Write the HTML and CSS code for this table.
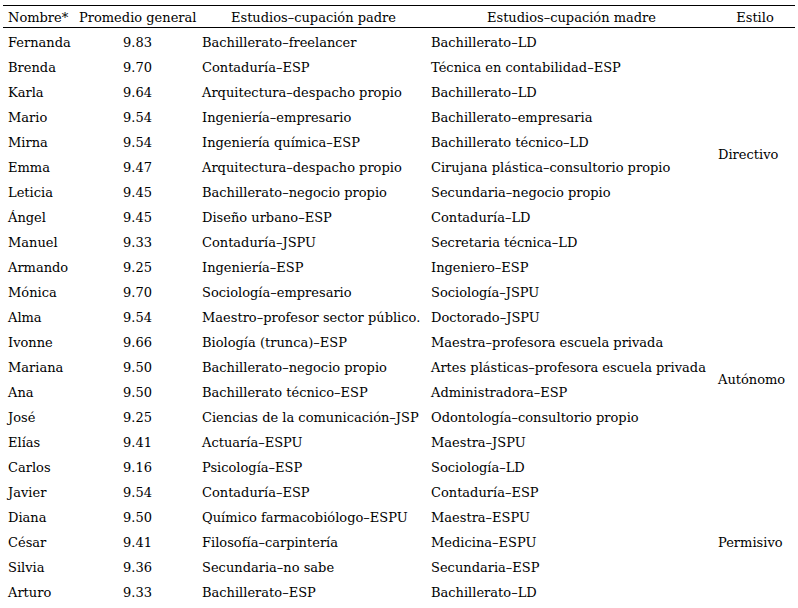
FILE: index.html
```html
<!DOCTYPE html>
<html lang="es">
<head>
<meta charset="utf-8">
<link rel="stylesheet" href="styles.css">
</head>
<body>
<table class="data">
  <colgroup>
    <col class="c-name"><col class="c-avg"><col class="c-dad"><col class="c-mom"><col class="c-style">
  </colgroup>
  <thead>
    <tr>
      <th class="left">Nombre*</th>
      <th>Promedio general</th>
      <th>Estudios–cupación padre</th>
      <th>Estudios–cupación madre</th>
      <th>Estilo</th>
    </tr>
  </thead>
  <tbody>
    <tr><td>Fernanda</td><td class="num">9.83</td><td>Bachillerato–freelancer</td><td>Bachillerato–LD</td><td class="style" rowspan="10">Directivo</td></tr>
    <tr><td>Brenda</td><td class="num">9.70</td><td>Contaduría–ESP</td><td>Técnica en contabilidad–ESP</td></tr>
    <tr><td>Karla</td><td class="num">9.64</td><td>Arquitectura–despacho propio</td><td>Bachillerato–LD</td></tr>
    <tr><td>Mario</td><td class="num">9.54</td><td>Ingeniería–empresario</td><td>Bachillerato–empresaria</td></tr>
    <tr><td>Mirna</td><td class="num">9.54</td><td>Ingeniería química–ESP</td><td>Bachillerato técnico–LD</td></tr>
    <tr><td>Emma</td><td class="num">9.47</td><td>Arquitectura–despacho propio</td><td>Cirujana plástica–consultorio propio</td></tr>
    <tr><td>Leticia</td><td class="num">9.45</td><td>Bachillerato–negocio propio</td><td>Secundaria–negocio propio</td></tr>
    <tr><td>Ángel</td><td class="num">9.45</td><td>Diseño urbano–ESP</td><td>Contaduría–LD</td></tr>
    <tr><td>Manuel</td><td class="num">9.33</td><td>Contaduría–JSPU</td><td>Secretaria técnica–LD</td></tr>
    <tr><td>Armando</td><td class="num">9.25</td><td>Ingeniería–ESP</td><td>Ingeniero–ESP</td></tr>
    <tr><td>Mónica</td><td class="num">9.70</td><td>Sociología–empresario</td><td>Sociología–JSPU</td><td class="style" rowspan="8">Autónomo</td></tr>
    <tr><td>Alma</td><td class="num">9.54</td><td>Maestro–profesor sector público.</td><td>Doctorado–JSPU</td></tr>
    <tr><td>Ivonne</td><td class="num">9.66</td><td>Biología (trunca)–ESP</td><td>Maestra–profesora escuela privada</td></tr>
    <tr><td>Mariana</td><td class="num">9.50</td><td>Bachillerato–negocio propio</td><td>Artes plásticas–profesora escuela privada</td></tr>
    <tr><td>Ana</td><td class="num">9.50</td><td>Bachillerato técnico–ESP</td><td>Administradora–ESP</td></tr>
    <tr><td>José</td><td class="num">9.25</td><td>Ciencias de la comunicación–JSP</td><td>Odontología–consultorio propio</td></tr>
    <tr><td>Elías</td><td class="num">9.41</td><td>Actuaría–ESPU</td><td>Maestra–JSPU</td></tr>
    <tr><td>Carlos</td><td class="num">9.16</td><td>Psicología–ESP</td><td>Sociología–LD</td></tr>
    <tr><td>Javier</td><td class="num">9.54</td><td>Contaduría–ESP</td><td>Contaduría–ESP</td><td class="style" rowspan="5">Permisivo</td></tr>
    <tr><td>Diana</td><td class="num">9.50</td><td>Químico farmacobiólogo–ESPU</td><td>Maestra–ESPU</td></tr>
    <tr><td>César</td><td class="num">9.41</td><td>Filosofía–carpintería</td><td>Medicina–ESPU</td></tr>
    <tr><td>Silvia</td><td class="num">9.36</td><td>Secundaria–no sabe</td><td>Secundaria–ESP</td></tr>
    <tr><td>Arturo</td><td class="num">9.33</td><td>Bachillerato–ESP</td><td>Bachillerato–LD</td></tr>
  </tbody>
</table>
</body>
</html>
```

FILE: styles.css
```css
html, body {
  margin: 0;
  padding: 0;
  background: #ffffff;
}
body {
  padding: 5px 0 0 3px;
  font-family: "DejaVu Serif", serif;
  font-size: 13px;
  color: #000;
}
.data {
  border-collapse: collapse;
  width: 792px;
  table-layout: fixed;
}
.c-name { width: 73px; }
.c-avg { width: 123px; }
.c-dad { width: 229px; }
.c-mom { width: 287px; }
.c-style { width: 80px; }
.data thead tr {
  border-top: 1px solid #000;
  border-bottom: 1px solid #000;
}
.data th {
  font-weight: normal;
  text-align: center;
  height: 20px;
  padding: 1px 3px 0;
  white-space: nowrap;
  overflow: visible;
}
.data th.left {
  text-align: left;
  padding-left: 5px;
}
.data tbody tr {
  height: 25px;
}
.data td {
  padding: 4px 3px 0;
  white-space: nowrap;
  vertical-align: middle;
  overflow: visible;
}
.data td:first-child {
  padding-left: 5px;
}
.data td.num {
  text-align: center;
}
.data td.style {
  text-align: left;
}
```
